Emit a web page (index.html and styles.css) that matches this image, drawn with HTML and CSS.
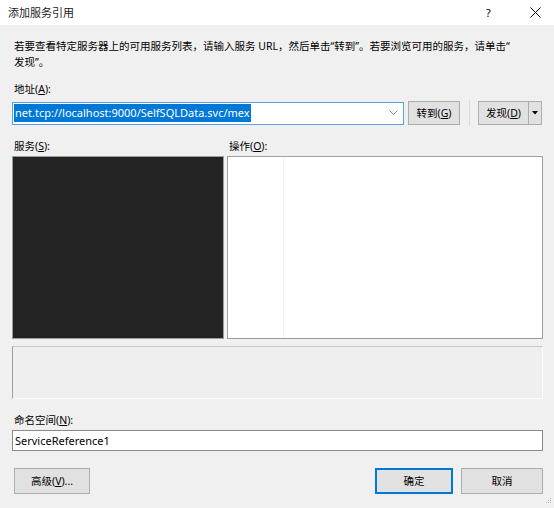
FILE: index.html
```html
<!DOCTYPE html>
<html lang="zh">
<head>
    <meta charset="utf-8">
    <title>添加服务引用</title>
    <link rel="stylesheet" href="styles.css">
</head>
<body>
<div class="dlg">
    <div class="dlg-title">
        <span class="dlg-caption">添加服务引用</span>
        <span class="dlg-help">?</span>
        <span class="dlg-close">
            <svg width="11" height="11" viewBox="0 0 11 11"><path d="M0.5 0.5L10.5 10.5M10.5 0.5L0.5 10.5" stroke="#000" stroke-width="1" fill="none"/></svg>
        </span>
    </div>

    <div class="dlg-body">
        <p class="desc">若要查看特定服务器上的可用服务列表，请输入服务 URL，然后单击“转到”。若要浏览可用的服务，请单击“<br>发现”。</p>

        <div class="lbl">地址(<u>A</u>):</div>
        <div class="addr-row">
            <div class="combo">
                <span class="combo-text"><span class="sel">net.tcp://localhost:9000/SelfSQLData.svc/mex</span></span>
                <svg class="combo-arrow" width="9" height="6" viewBox="0 0 9 6"><path d="M0.5 0.5L4.5 4.5L8.5 0.5" stroke="#8a8a8a" fill="none"/></svg>
            </div>
            <div class="btn btn-go">转到(<u>G</u>)</div>
            <div class="sep"></div>
            <div class="split">
                <div class="btn btn-find">发现(<u>D</u>)</div>
                <div class="btn btn-drop">
                    <svg width="6" height="4" viewBox="0 0 6 4"><path d="M0 0H6L3 3.5Z" fill="#000"/></svg>
                </div>
            </div>
        </div>

        <div class="panes">
            <div class="pane pane-svc">
                <div class="lbl">服务(<u>S</u>):</div>
                <div class="svc-list"></div>
            </div>
            <div class="pane pane-ops">
                <div class="lbl">操作(<u>O</u>):</div>
                <div class="ops-list"><div class="ops-col"></div></div>
            </div>
        </div>

        <div class="status-box"></div>

        <div class="lbl lbl-ns">命名空间(<u>N</u>):</div>
        <div class="ns-input">ServiceReference1</div>

        <div class="btn-row">
            <div class="btn btn-adv">高级(<u>V</u>)...</div>
            <div class="btn-right">
                <div class="btn btn-ok">确定</div>
                <div class="btn btn-cancel">取消</div>
            </div>
        </div>
    </div>
    <svg class="grip" width="7" height="7" viewBox="0 0 7 7">
        <rect x="5" y="0" width="1" height="1" fill="#b8b8b8"/>
        <rect x="3" y="2" width="1" height="1" fill="#b8b8b8"/>
        <rect x="5" y="2" width="1" height="1" fill="#b8b8b8"/>
        <rect x="1" y="4" width="1" height="1" fill="#b8b8b8"/>
        <rect x="3" y="4" width="1" height="1" fill="#b8b8b8"/>
        <rect x="5" y="4" width="1" height="1" fill="#b8b8b8"/>
    </svg>
</div>
</body>
</html>
```

FILE: styles.css
```css
body {
    margin: 0;
    background: #f0f0f0;
    color: #000;
    font: 10.5px/16px "Noto Sans", "Noto Sans CJK SC", sans-serif;
}

u {
    text-decoration: underline;
    text-underline-offset: 1px;
}

.dlg {
    position: relative;
    width: 554px;
    height: 508px;
    background: #f0f0f0;
    overflow: hidden;
}

.dlg-title {
    display: flex;
    align-items: center;
    height: 25px;
    background: #fff;
    padding-left: 8px;
    font-size: 11px;
}

.dlg-caption {
    flex: 1;
    color: #1a1a1a;
}

.dlg-help {
    width: 12px;
    margin-right: 32px;
    font-size: 11px;
}

.dlg-close {
    display: flex;
    width: 11px;
    margin-right: 13px;
}

.dlg-body {
    padding: 0 11px 0 12px;
}

.desc {
    margin: 13px 0 0 2px;
    white-space: nowrap;
}

.lbl {
    padding-left: 2px;
    height: 16px;
}

.desc + .lbl {
    margin-top: 11px;
}

.addr-row {
    display: flex;
    align-items: center;
    margin-top: 4px;
    height: 24px;
}

.combo {
    display: flex;
    align-items: center;
    width: 390px;
    height: 21px;
    border: 1px solid #5aa0e6;
    background: #fff;
}

.combo-text {
    flex: 1;
    padding-left: 1px;
    font-size: 11px;
}

.sel {
    background: #0078d7;
    color: #fff;
    padding: 1px 1px 2px;
}

.combo-arrow {
    margin-right: 5px;
}

.btn {
    display: flex;
    align-items: center;
    justify-content: center;
    box-sizing: border-box;
    background: #e1e1e1;
    border: 1px solid #adadad;
}

.btn-go {
    width: 52px;
    height: 24px;
    margin-left: 4px;
}

.sep {
    width: 1px;
    height: 26px;
    background: #dadada;
    margin: 0 8px 0 9px;
}

.split {
    display: flex;
}

.btn-find {
    width: 51px;
    height: 24px;
}

.btn-drop {
    width: 13px;
    height: 24px;
    border-left: none;
}

.panes {
    display: flex;
    margin-top: 13px;
    gap: 3px;
}

.pane-svc {
    width: 212px;
}

.pane-ops {
    flex: 1;
}

.pane .lbl {
    margin-bottom: 2px;
}

.svc-list {
    box-sizing: border-box;
    height: 183px;
    background: #232323;
    border: 1px solid #9c9c9c;
}

.ops-list {
    box-sizing: border-box;
    height: 183px;
    background: #fff;
    border: 1px solid #a0a0a0;
    border-bottom-color: #9a9a9a;
}

.ops-col {
    width: 55px;
    height: 100%;
    border-right: 1px solid #f4f4f4;
}

.status-box {
    box-sizing: border-box;
    height: 53px;
    margin-top: 7px;
    border: 1px solid;
    border-color: #c8c8c8 #fbfbfb #fbfbfb #a0a0a0;
    background: #efefef;
}

.lbl-ns {
    margin-top: 13px;
}

.ns-input {
    box-sizing: border-box;
    height: 21px;
    margin-top: 2px;
    padding-left: 2px;
    line-height: 19px;
    font-size: 11px;
    background: #fff;
    border: 1px solid #8a8a8a;
}

.btn-row {
    display: flex;
    justify-content: space-between;
    margin-top: 17px;
}

.btn-adv {
    width: 76px;
    height: 26px;
    margin-left: 2px;
}

.btn-right {
    display: flex;
    gap: 8px;
}

.btn-ok {
    width: 78px;
    height: 26px;
    border: 2px solid #0078d7;
}

.btn-cancel {
    width: 82px;
    height: 26px;
}

.grip {
    position: absolute;
    right: 2px;
    bottom: 3px;
}
```
